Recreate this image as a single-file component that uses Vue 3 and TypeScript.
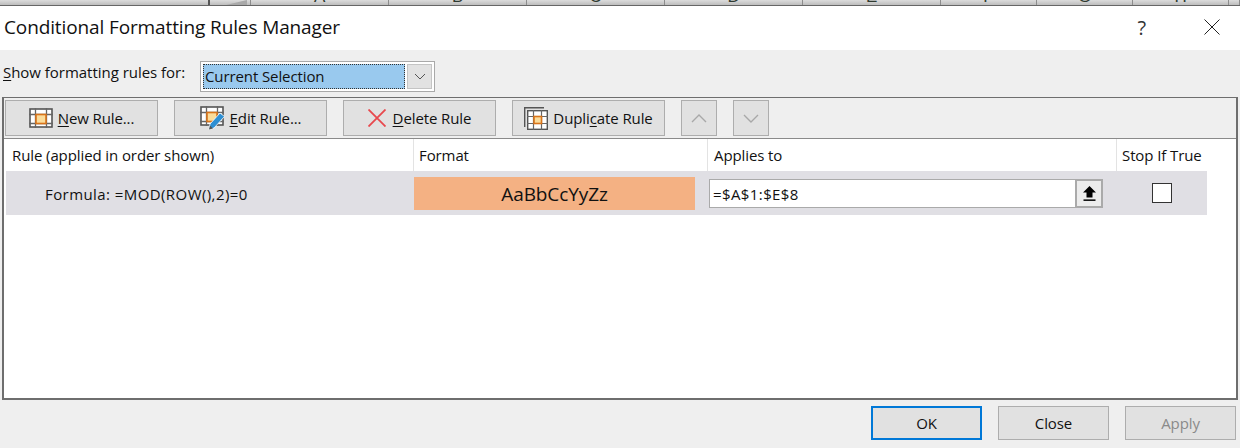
<script setup lang="ts">
// Excel's Conditional Formatting Rules Manager dialog
// the sheet behind shows through at the top: only the bottoms of the column letters are visible
const stripCells = [
  { w: 210, t: '', cls: 'row-gutter' },
  { w: 41, t: '', cls: 'select-all' },
  { w: 138, t: 'A', cls: '' },
  { w: 138, t: 'B', cls: '' },
  { w: 138, t: 'C', cls: '' },
  { w: 138, t: 'D', cls: '' },
  { w: 138, t: 'E', cls: '' },
  { w: 96, t: 'F', cls: '' },
  { w: 96, t: 'G', cls: '' },
  { w: 96, t: 'H', cls: '' },
  { w: 11, t: '', cls: '' },
]

const toolButtons = [
  { icon: 'new', pre: '', key: 'N', post: 'ew Rule...', cls: 'b-new' },
  { icon: 'edit', pre: '', key: 'E', post: 'dit Rule...', cls: 'b-edit' },
  { icon: 'del', pre: '', key: 'D', post: 'elete Rule', cls: 'b-del' },
  { icon: 'dup', pre: 'Dupli', key: 'c', post: 'ate Rule', cls: 'b-dup' },
]
</script>

<template>
  <div class="dialog">
    <div class="strip">
      <span v-for="(c, i) in stripCells" :key="i" class="strip-cell" :class="c.cls" :style="{ width: c.w + 'px' }">
        <span v-if="c.t" class="col-letter">{{ c.t }}</span>
      </span>
    </div>

    <div class="titlebar">
      <span class="title">Conditional Formatting Rules Manager</span>
      <span class="help">?</span>
      <svg class="close" width="16" height="16" viewBox="0 0 16 16">
        <path d="M0.5 0.5 15.5 15.5M15.5 0.5 0.5 15.5" stroke="#222" stroke-width="1" fill="none" />
      </svg>
    </div>

    <div class="body">
      <div class="show-row">
        <span class="show-label"><u>S</u>how formatting rules for:</span>
        <div class="combo">
          <div class="combo-value">Current Selection</div>
          <div class="combo-btn">
            <svg width="12" height="7" viewBox="0 0 12 7">
              <path d="M1 1 6 6 11 1" stroke="#555" stroke-width="1" fill="none" />
            </svg>
          </div>
        </div>
      </div>

      <div class="panel">
        <div class="toolbar">
          <button v-for="b in toolButtons" :key="b.key" class="tbtn" :class="b.cls">
            <svg v-if="b.icon === 'new'" width="24" height="20" viewBox="0 0 24 20">
              <rect x="1" y="1" width="22" height="18" fill="#fff" stroke="#555" stroke-width="1.6" />
              <path d="M0 6.5H24M0 15.5H24M6.5 0V20M17.5 0V20" stroke="#666" stroke-width="1.3" fill="none" />
              <rect x="7" y="6.5" width="10" height="9" fill="#fbdc9a" stroke="#d9741a" stroke-width="1.6" />
            </svg>
            <svg v-else-if="b.icon === 'edit'" width="25" height="24" viewBox="0 0 25 24">
              <rect x="1" y="1" width="22" height="18" fill="#fff" stroke="#555" stroke-width="1.6" />
              <path d="M0 6.5H24M0 15.5H24M6.5 0V20M17.5 0V20" stroke="#666" stroke-width="1.3" fill="none" />
              <rect x="7" y="6.5" width="10" height="9" fill="#fbdc9a" stroke="#d9741a" stroke-width="1.6" />
              <path d="M9 23.5 10 18 20 7 24.5 10.5 14 22Z" fill="#2e8fd3" stroke="#fff" stroke-width="0.8" />
              <path d="M9 23.5 10 19.5 13 22.5Z" fill="#555" />
            </svg>
            <svg v-else-if="b.icon === 'del'" width="18" height="18" viewBox="0 0 18 18">
              <path d="M0.5 0.5 17.5 17.5M17.5 0.5 0.5 17.5" stroke="#e8484d" stroke-width="1.8" fill="none" />
            </svg>
            <svg v-else width="24" height="23" viewBox="0 0 24 23">
              <path d="M0.7 20V0.7H20" stroke="#555" stroke-width="1.4" fill="none" />
              <rect x="3.7" y="3.7" width="19.6" height="18.6" fill="#fff" stroke="#555" stroke-width="1.4" />
              <path d="M3 9.5H24M3 16.5H24M9.5 3V23M17.5 3V23" stroke="#666" stroke-width="1.2" fill="none" />
              <rect x="10" y="9.5" width="7.5" height="7" fill="#fbdc9a" stroke="#d9741a" stroke-width="1.6" />
            </svg>
            <span class="tlabel">{{ b.pre }}<u>{{ b.key }}</u>{{ b.post }}</span>
          </button>
          <button class="arrow">
            <svg width="16" height="9" viewBox="0 0 16 9">
              <path d="M1 8 8 1 15 8" stroke="#a8a8a8" stroke-width="1.4" fill="none" />
            </svg>
          </button>
          <button class="arrow">
            <svg width="16" height="9" viewBox="0 0 16 9">
              <path d="M1 1 8 8 15 1" stroke="#a8a8a8" stroke-width="1.4" fill="none" />
            </svg>
          </button>
        </div>

        <div class="grid-area">
          <div class="grid">
            <div class="head c-rule">Rule (applied in order shown)</div>
            <div class="head c-format">Format</div>
            <div class="head c-applies">Applies to</div>
            <div class="head c-stop">Stop If True</div>

            <div class="cell c-rule formula">Formula: =MOD(ROW(),2)=0</div>
            <div class="cell c-format"><div class="swatch">AaBbCcYyZz</div></div>
            <div class="cell c-applies">
              <div class="range">
                <span class="range-text">=$A$1:$E$8</span>
                <span class="range-btn">
                  <svg width="13" height="15" viewBox="0 0 13 15">
                    <path d="M6.5 0 13 6.5H9.5V11.5H3.5V6.5H0Z" fill="#000" />
                    <rect x="0.5" y="13.4" width="12" height="1.5" fill="#000" />
                  </svg>
                </span>
              </div>
            </div>
            <div class="cell c-stop"><span class="check" /></div>
          </div>
        </div>
      </div>

      <div class="footer">
        <button class="fbtn ok">OK</button>
        <button class="fbtn">Close</button>
        <button class="fbtn off">Apply</button>
      </div>
    </div>
  </div>
</template>

<style scoped>
.dialog { width: 1240px; height: 448px; display: flex; flex-direction: column; background: #fff; overflow: hidden; font-family: "Open Sans", "Noto Sans", sans-serif; font-size: 15px; color: #111; letter-spacing: -0.1px; }
.strip { height: 6px; flex: none; display: flex; background: linear-gradient(#dcdcdc, #bdbdbd); border-bottom: 1px solid #666; box-sizing: border-box; overflow: hidden; }
.strip-cell { height: 100%; border-right: 1px solid #8c8c8c; box-sizing: border-box; display: flex; justify-content: center; position: relative; overflow: hidden; }
.row-gutter { border-right: 2px solid #555; }
.select-all { background: linear-gradient(#dcdcdc, #bdbdbd); }
.select-all::after { content: ""; position: absolute; right: 3px; bottom: 0; border-style: solid; border-width: 0 0 5px 21px; border-color: transparent transparent #a9a9a9 transparent; }
.col-letter { display: block; font-family: "Liberation Sans", sans-serif; font-size: 17px; line-height: 16px; height: 16px; margin-top: -11px; color: #2f3a30; }
.titlebar { height: 44px; flex: none; display: flex; align-items: center; padding: 0 20px 2px 4px; box-sizing: border-box; }
.title { font-size: 19px; flex: 1; letter-spacing: -0.12px; }
.help { font-size: 20px; color: #333; margin-right: 58px; }
.body { flex: 1; display: flex; flex-direction: column; background: #efefef; min-height: 0; }
.show-row { height: 47px; flex: none; display: flex; align-items: flex-start; padding: 11px 0 0 3px; box-sizing: border-box; }
.show-label { width: 197px; line-height: 24px; margin-top: -1px; height: 24px; margin-bottom: 1px; letter-spacing: -0.03px; }
.combo { width: 235px; height: 31px; box-sizing: border-box; border: 1px solid #a9a9a9; background: #fff; display: flex; padding: 2px; gap: 2px; }
.combo-value { flex: 1; background: #99c9ee; border: 1px dotted #333; padding-left: 1px; line-height: 22px; }
.combo-btn { width: 25px; background: #e2e2e2; border: 1px solid #c4c4c4; box-sizing: border-box; display: flex; align-items: center; justify-content: center; }
.panel { margin: 0 2px; height: 303px; flex: none; box-sizing: border-box; border: 2px solid #6e6e6e; border-top-width: 1px; display: flex; flex-direction: column; background: #fff; }
.toolbar { height: 41px; flex: none; box-sizing: border-box; background: #efefef; border-bottom: 1px solid #8a8a8a; display: flex; align-items: flex-start; padding: 2px 0 0 1px; gap: 16px; }
button { font-family: inherit; font-size: 15px; letter-spacing: inherit; color: inherit; background: #e1e1e1; border: 1px solid #adadad; padding: 0; display: flex; align-items: center; justify-content: center; box-sizing: border-box; }
.tbtn { width: 153px; height: 36px; gap: 5px; }
.b-del { gap: 7px; }
.arrow { width: 36px; height: 36px; }
.grid-area { flex: 1; padding-left: 2px; }
.grid { display: grid; grid-template-columns: 408px 294px 409px 90px; grid-template-rows: 32px 44px; width: 1201px; }
.head { display: flex; align-items: center; padding-left: 6px; border-right: 1px solid #e3e3e3; box-sizing: border-box; }
.c-format.head { padding-left: 5px; }
.c-stop.head { border-right: 0; white-space: nowrap; padding-left: 5px; }
.cell { background: #e0dfe4; display: flex; align-items: center; box-sizing: border-box; }
.formula { padding-left: 39px; padding-top: 2px; letter-spacing: 0.42px; }
.swatch { width: 281px; height: 33px; background: #f4b183; font-size: 19px; display: flex; align-items: center; justify-content: center; margin-top: 1px; }
.range { margin-left: 1px; margin-top: 1px; width: 394px; height: 29px; box-sizing: border-box; border: 1px solid #aaa; background: #fff; display: flex; align-items: center; }
.range-text { flex: 1; padding-left: 3px; letter-spacing: 0.4px; }
.range-btn { width: 28px; height: 29px; margin: -1px -1px -1px 0; background: #ececec; border: 2px solid #aaa; box-sizing: border-box; display: flex; align-items: center; justify-content: center; }
.check { width: 20px; height: 20px; box-sizing: border-box; background: #fff; border: 1px solid #333; margin-left: 35px; }
.footer { flex: 1; display: flex; align-items: center; justify-content: flex-end; padding: 0 4px 2px 0; gap: 16px; }
.fbtn { width: 111px; height: 34px; }
.ok { border: 2px solid #0078d7; }
.off { color: #8a8a8a; }
u { text-underline-offset: 2px; }
</style>
